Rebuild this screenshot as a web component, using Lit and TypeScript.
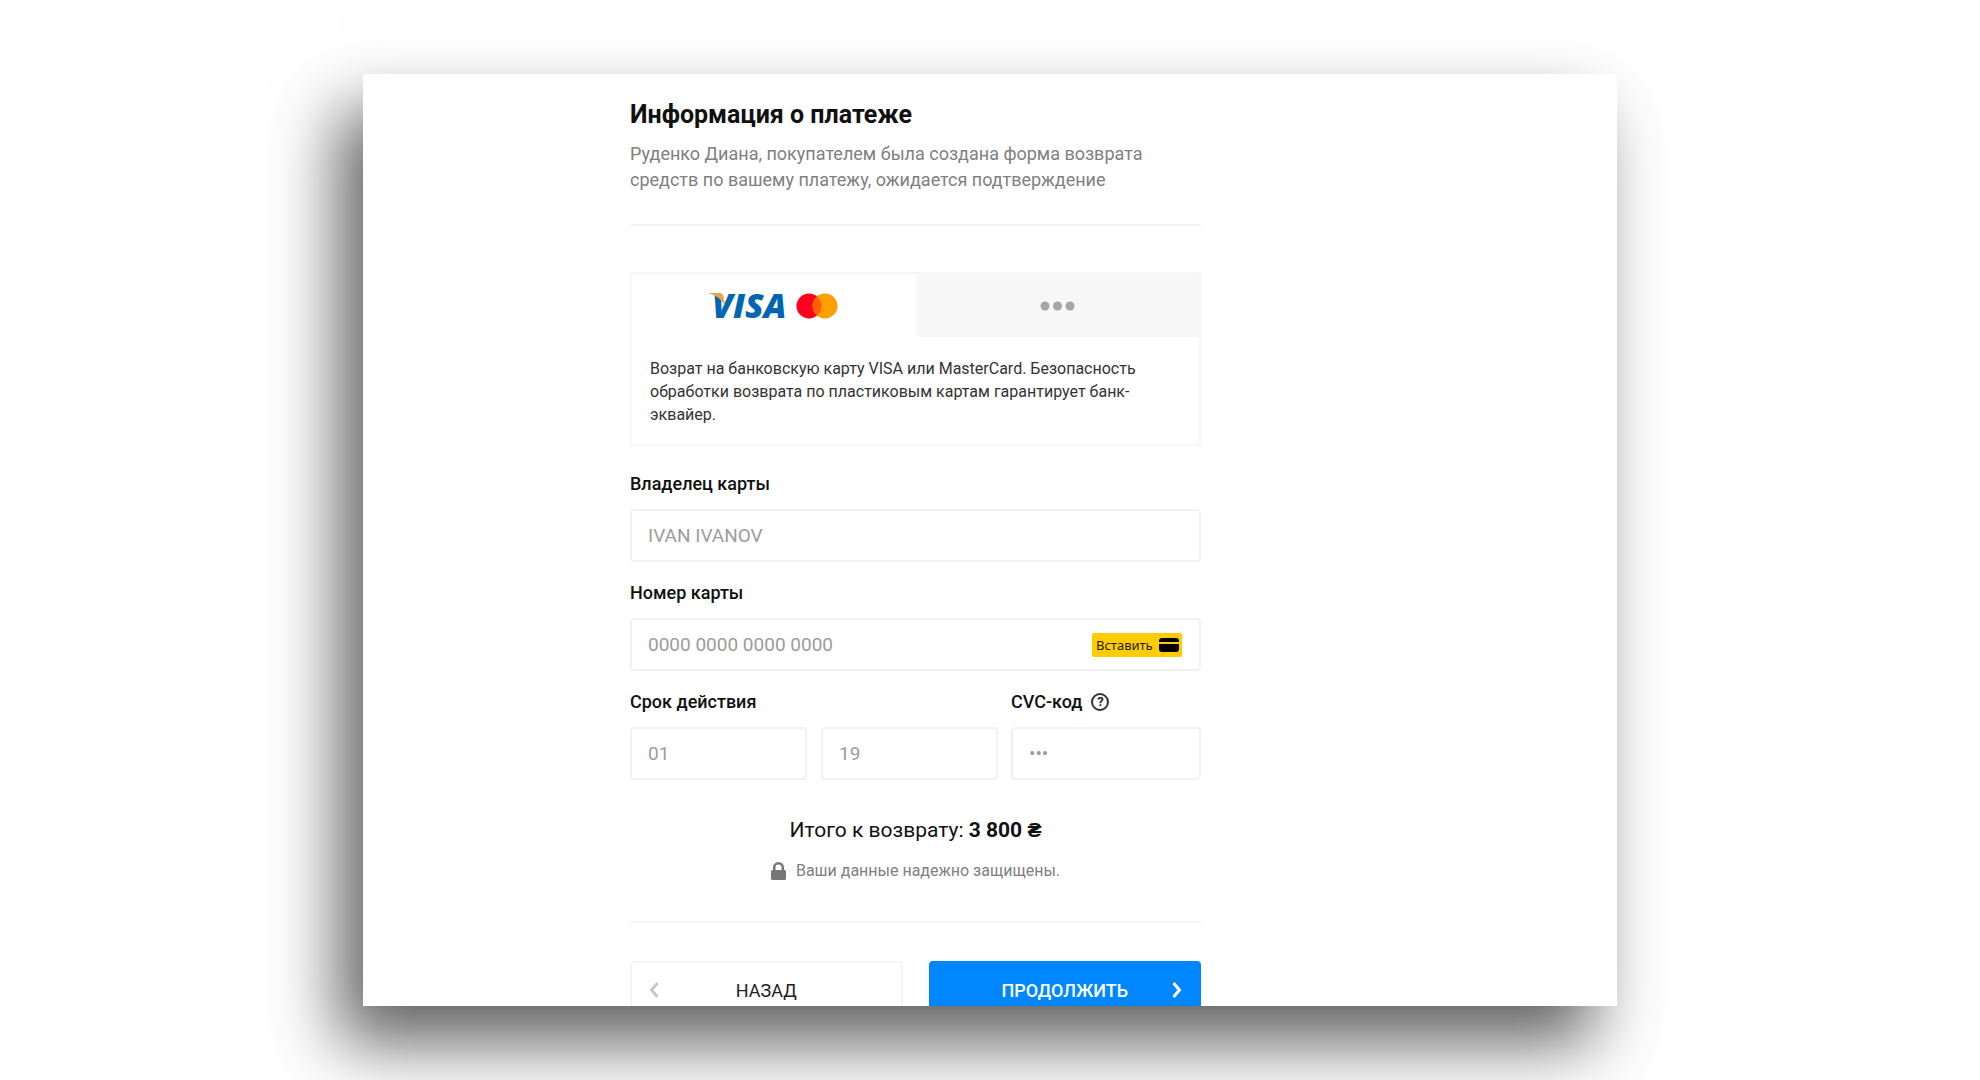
import { LitElement, html, css } from "lit";
import { customElement, state } from "lit/decorators.js";

@customElement("app-root")
export class AppRoot extends LitElement {
  @state() private tab: "card" | "other" = "card";

  static styles = css`
    :host {
      display: block;
      font-family: Roboto, "Liberation Sans", sans-serif;
      color: #111;
      background: #fff;
    }
    * {
      box-sizing: border-box;
    }
    .page {
      display: flex;
      justify-content: center;
      height: 100vh;
      padding: 74px 24px;
      overflow: hidden;
    }
    .panel {
      flex: 0 1 1254px;
      display: grid;
      grid-template-columns: minmax(24px, 267fr) minmax(0, 571px) minmax(24px, 416fr);
      box-shadow: -24px 37px 64px rgba(0, 0, 0, 0.62);
      background: #fff;
      min-height: 0;
    }
    .clip {
      grid-column: 2;
      overflow: hidden;
      min-height: 0;
      padding-top: 25px;
    }
    h1 {
      margin: 0 0 10px;
      font-size: 25px;
      line-height: 32px;
      font-weight: 700;
    }
    .lead {
      margin: 0;
      font-size: 18px;
      line-height: 26px;
      color: #808080;
    }
    .rule {
      border: 0;
      height: 2px;
      margin: 31px 0 0;
      background: #f4f4f4;
    }
    .method {
      margin-top: 46px;
      border: 2px solid #f6f6f6;
    }
    .tabs {
      display: grid;
      grid-template-columns: 1fr 1fr;
    }
    .tab {
      display: flex;
      align-items: center;
      justify-content: center;
      height: 63px;
      padding: 0;
      border: 0;
      background: #f7f7f7;
      cursor: pointer;
    }
    .tab.active {
      background: #fff;
    }
    .visa {
      font-family: "Open Sans", sans-serif;
      font-size: 34px;
      font-weight: 800;
      font-style: italic;
      fill: #0066b2;
    }
    .method-text {
      margin: 0;
      padding: 20px 18px 18px;
      font-size: 16px;
      line-height: 23px;
      color: #333;
    }
    .field {
      display: block;
      margin-top: 19px;
      min-width: 0;
    }
    .first {
      margin-top: 26px;
    }
    .label-row {
      display: flex;
      align-items: center;
      gap: 9px;
      height: 24px;
      margin-bottom: 13px;
    }
    label {
      font-size: 18px;
      line-height: 24px;
      font-weight: 500;
    }
    .control {
      display: flex;
      align-items: center;
      height: 53px;
      border: 2px solid #f2f2f2;
      border-radius: 4px;
      padding-right: 17px;
    }
    input {
      flex: 1;
      width: 100%;
      min-width: 0;
      height: 49px;
      padding: 0 0 0 16px;
      border: 0;
      outline: 0;
      background: none;
      font-family: inherit;
      font-size: 19px;
      color: #333;
    }
    input::placeholder {
      color: #9c9c9c;
      opacity: 1;
    }
    .paste {
      display: flex;
      align-items: center;
      justify-content: space-between;
      width: 90px;
      height: 24px;
      padding: 0 3px 0 4px;
      border: 0;
      border-radius: 2px;
      background: #fc0;
      font-family: "Noto Sans", sans-serif;
      font-size: 13px;
      color: #222;
      cursor: pointer;
    }
    .details {
      display: grid;
      grid-template-columns: 368fr 190fr;
      gap: 13px;
    }
    .pair {
      display: grid;
      grid-template-columns: 1fr 1fr;
      gap: 14px;
    }
    .help {
      display: grid;
      place-items: center;
      width: 18px;
      height: 18px;
      padding: 0;
      border: 2px solid #333;
      border-radius: 50%;
      background: none;
      font-family: inherit;
      font-size: 13px;
      line-height: 14px;
      font-weight: 700;
      color: #222;
    }
    .total {
      margin: 36px 0 0;
      text-align: center;
      font-size: 21px;
      line-height: 28px;
    }
    .total strong {
      font-weight: 700;
    }
    .secure {
      display: flex;
      align-items: center;
      justify-content: center;
      gap: 10px;
      margin: 16px 0 0;
      font-size: 16px;
      line-height: 22px;
      color: #808080;
    }
    .rule.low {
      margin-top: 39px;
    }
    .actions {
      display: grid;
      grid-template-columns: 1fr 1fr;
      gap: 26px;
      margin-top: 38px;
    }
    .action {
      display: grid;
      grid-template-columns: 10px 1fr 10px;
      align-items: center;
      height: 58px;
      padding: 0 17px;
      border: 2px solid #f4f4f4;
      border-radius: 4px;
      background: #fff;
      font-family: inherit;
      font-size: 18px;
      color: #222;
      cursor: pointer;
    }
    .action span {
      grid-column: 2;
      text-align: center;
    }
    .primary {
      border-color: #0087ff;
      background: #0087ff;
      font-weight: 500;
      color: #fff;
    }
  `;

  render() {
    return html`
      <div class="page">
        <main class="panel">
          <form class="clip" @submit=${(e: Event) => e.preventDefault()}>
            <h1>Информация о платеже</h1>
            <p class="lead">
              Руденко Диана, покупателем была создана форма возврата средств по вашему платежу,
              ожидается подтверждение
            </p>
            <hr class="rule" />
            <section class="method">
              <div class="tabs" role="tablist">
                <button
                  type="button"
                  role="tab"
                  aria-label="VISA, MasterCard"
                  aria-selected=${this.tab === "card"}
                  class="tab active"
                  @click=${() => (this.tab = "card")}
                >
                  <svg width="132" height="54" viewBox="-2 -13 132 54" aria-hidden="true">
                    <text class="visa" x="2" y="26">VISA</text>
                    <path d="M-1 1h10c3 0 4 1 4.500 4l1.500 9C12 8 6 3-1 1.500z" fill="#e9a349" />
                    <circle cx="99" cy="14" r="12.500" fill="#ff001f" />
                    <circle cx="115" cy="14" r="12.500" fill="#ff9f00" />
                    <path d="M107 4.400a12.500 12.500 0 0 1 0 19.200a12.500 12.500 0 0 1 0-19.200z" fill="#ff5f00" />
                  </svg>
                </button>
                <button
                  type="button"
                  role="tab"
                  aria-label="Другой способ"
                  aria-selected=${this.tab === "other"}
                  class="tab"
                  @click=${() => (this.tab = "other")}
                >
                  <svg width="36" height="10" viewBox="0 0 36 10" fill="#a6a6a6" aria-hidden="true">
                    <circle cx="6" cy="5" r="4.500" />
                    <circle cx="18.500" cy="5" r="4.500" />
                    <circle cx="31" cy="5" r="4.500" />
                  </svg>
                </button>
              </div>
              <p class="method-text">
                Возрат на банковскую карту VISA или MasterCard. Безопасность обработки возврата по
                пластиковым картам гарантирует банк-эквайер.
              </p>
            </section>

            <div class="field first">
              <div class="label-row"><label for="owner">Владелец карты</label></div>
              <div class="control"><input id="owner" placeholder="IVAN IVANOV" /></div>
            </div>
            <div class="field">
              <div class="label-row"><label for="number">Номер карты</label></div>
              <div class="control">
                <input id="number" inputmode="numeric" placeholder="0000 0000 0000 0000" />
                <button type="button" class="paste">
                  Вставить
                  <svg width="20" height="14" viewBox="0 0 20 14" aria-hidden="true">
                    <path d="M0 4V3a3 3 0 0 1 3-3h14a3 3 0 0 1 3 3v1zM0 6h20v5a3 3 0 0 1-3 3H3a3 3 0 0 1-3-3z" />
                  </svg>
                </button>
              </div>
            </div>
            <div class="details">
              <div class="field">
                <div class="label-row"><label for="month">Срок действия</label></div>
                <div class="pair">
                  <div class="control"><input id="month" inputmode="numeric" placeholder="01" /></div>
                  <div class="control">
                    <input id="year" aria-label="Год" inputmode="numeric" placeholder="19" />
                  </div>
                </div>
              </div>
              <div class="field">
                <div class="label-row">
                  <label for="cvc">CVC-код</label>
                  <button type="button" class="help">?</button>
                </div>
                <div class="control"><input id="cvc" type="password" placeholder="•••" /></div>
              </div>
            </div>

            <p class="total">Итого к возврату: <strong>3 800 ₴</strong></p>
            <p class="secure">
              <svg width="15" height="18" viewBox="0 0 15 18" fill="#777" aria-hidden="true">
                <path d="M2 8V5.500a5.500 5.500 0 0 1 11 0V8h.5A1.500 1.500 0 0 1 15 9.500v7a1.500 1.500 0 0 1-1.500 1.500h-12A1.500 1.500 0 0 1 0 16.500v-7A1.500 1.500 0 0 1 1.500 8zM4.500 8h6V5.500a3 3 0 0 0-6 0z" />
              </svg>
              Ваши данные надежно защищены.
            </p>
            <hr class="rule low" />
            <div class="actions">
              <button type="button" class="action">
                <svg width="10" height="18" viewBox="0 0 10 18" fill="none" stroke="#c8c8c8" stroke-width="3" aria-hidden="true">
                  <path d="M8.500 2L2.500 9l6 7" />
                </svg>
                <span>НАЗАД</span>
              </button>
              <button type="submit" class="action primary">
                <span>ПРОДОЛЖИТЬ</span>
                <svg width="10" height="18" viewBox="0 0 10 18" fill="none" stroke="#fff" stroke-width="3" aria-hidden="true">
                  <path d="M1.500 2l6 7-6 7" />
                </svg>
              </button>
            </div>
          </form>
        </main>
      </div>
    `;
  }
}
